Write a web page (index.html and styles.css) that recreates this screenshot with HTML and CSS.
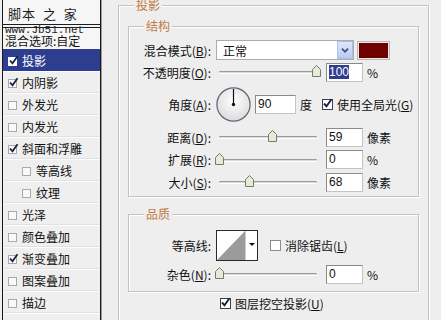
FILE: index.html
```html
<!DOCTYPE html>
<html lang="zh-CN">
<head>
    <meta charset="UTF-8">
    <meta name="viewport" content="width=device-width, initial-scale=1.0">
    <title>图层样式</title>
    <link rel="stylesheet" href="styles.css">
</head>
<body>
    <div class="styles-list">
        <div class="brand">脚本 之 家</div>
        <div class="brand-rule"></div>
        <div class="brand-url">www.Jb51.net</div>
        <div class="blend-opt">混合选项:自定</div>

        <div class="item active"><span class="cb"><svg viewBox="0 0 11 11"><path d="M2 5.5l2.5 2.8 5-7"/></svg></span>投影</div>
        <div class="item"><span class="cb"><svg viewBox="0 0 11 11"><path d="M2 5.5l2.5 2.8 5-7"/></svg></span>内阴影</div>
        <div class="item"><span class="cb"></span>外发光</div>
        <div class="item"><span class="cb"></span>内发光</div>
        <div class="item"><span class="cb"><svg viewBox="0 0 11 11"><path d="M2 5.5l2.5 2.8 5-7"/></svg></span>斜面和浮雕</div>
        <div class="item sub"><span class="cb"></span>等高线</div>
        <div class="item sub"><span class="cb"></span>纹理</div>
        <div class="item"><span class="cb"></span>光泽</div>
        <div class="item"><span class="cb"></span>颜色叠加</div>
        <div class="item"><span class="cb"><svg viewBox="0 0 11 11"><path d="M2 5.5l2.5 2.8 5-7"/></svg></span>渐变叠加</div>
        <div class="item"><span class="cb"></span>图案叠加</div>
        <div class="item"><span class="cb"></span>描边</div>
        <div class="item"></div>
    </div>

    <div class="main">
        <div class="group outer">
            <span class="group-title">投影</span>

            <div class="group inner">
                <span class="group-title">结构</span>

                <div class="row">
                    <span class="label">混合模式(<u>B</u>):</span>
                    <div class="select">
                        <span>正常</span>
                        <span class="select-btn"><svg viewBox="0 0 16 18"><path d="M4.5 7.5l3.5 3.5 3.5-3.5"/></svg></span>
                    </div>
                    <span class="swatch"></span>
                </div>

                <div class="row">
                    <span class="label">不透明度(<u>O</u>):</span>
                    <div class="slider">
                        <span class="track"></span>
                        <svg class="thumb" style="left: 96px" viewBox="0 0 9 12"><polygon points="0.5,4.5 4.5,0.5 8.5,4.5 8.5,11.5 0.5,11.5"/></svg>
                    </div>
                    <span class="field"><span class="sel">100</span></span>
                    <span class="unit">%</span>
                </div>

                <div class="row tall">
                    <span class="label">角度(<u>A</u>):</span>
                    <svg class="dial" viewBox="0 0 35 35">
                        <defs>
                            <radialGradient id="dialFill" cx="50%" cy="40%" r="60%">
                                <stop offset="0" stop-color="#ffffff"/>
                                <stop offset="1" stop-color="#dcdcdc"/>
                            </radialGradient>
                        </defs>
                        <circle cx="17.5" cy="17.5" r="16.6" fill="url(#dialFill)" stroke="#5d6474" stroke-width="1.2"/>
                        <line x1="17.5" y1="17.5" x2="17.5" y2="2" stroke="#111" stroke-width="1.2"/>
                        <circle cx="17.5" cy="17.5" r="1.7" fill="#111"/>
                    </svg>
                    <span class="field wide">90</span>
                    <span class="unit">度</span>
                    <span class="check"><svg viewBox="0 0 11 11"><path d="M2 5.5l2.5 2.8 5-7"/></svg></span>
                    <span class="check-text">使用全局光(<u>G</u>)</span>
                </div>

                <div class="row">
                    <span class="label">距离(<u>D</u>):</span>
                    <div class="slider">
                        <span class="track"></span>
                        <svg class="thumb" style="left: 52px" viewBox="0 0 9 12"><polygon points="0.5,4.5 4.5,0.5 8.5,4.5 8.5,11.5 0.5,11.5"/></svg>
                    </div>
                    <span class="field">59</span>
                    <span class="unit">像素</span>
                </div>

                <div class="row mid">
                    <span class="label">扩展(<u>R</u>):</span>
                    <div class="slider">
                        <span class="track"></span>
                        <svg class="thumb" style="left: -1px" viewBox="0 0 9 12"><polygon points="0.5,4.5 4.5,0.5 8.5,4.5 8.5,11.5 0.5,11.5"/></svg>
                    </div>
                    <span class="field">0</span>
                    <span class="unit">%</span>
                </div>

                <div class="row">
                    <span class="label">大小(<u>S</u>):</span>
                    <div class="slider">
                        <span class="track"></span>
                        <svg class="thumb" style="left: 29px" viewBox="0 0 9 12"><polygon points="0.5,4.5 4.5,0.5 8.5,4.5 8.5,11.5 0.5,11.5"/></svg>
                    </div>
                    <span class="field">68</span>
                    <span class="unit">像素</span>
                </div>
            </div>

            <div class="group inner quality">
                <span class="group-title">品质</span>

                <div class="row contour-row">
                    <span class="label">等高线:</span>
                    <svg class="contour" viewBox="0 0 42 31">
                        <rect x="0.5" y="0.5" width="41" height="30" fill="#fff" stroke="#2a2a2a"/>
                        <polygon points="1,30 29,1 29,30" fill="#9b9b9b"/>
                        <line x1="29.5" y1="1" x2="29.5" y2="30" stroke="#cfcfcf"/>
                        <polygon points="33,13 39,13 36,16" fill="#111"/>
                    </svg>
                    <span class="check off"></span>
                    <span class="check-text">消除锯齿(<u>L</u>)</span>
                </div>

                <div class="row noise-row">
                    <span class="label">杂色(<u>N</u>):</span>
                    <div class="slider">
                        <span class="track"></span>
                        <svg class="thumb" style="left: -1px" viewBox="0 0 9 12"><polygon points="0.5,4.5 4.5,0.5 8.5,4.5 8.5,11.5 0.5,11.5"/></svg>
                    </div>
                    <span class="field">0</span>
                    <span class="unit">%</span>
                </div>
            </div>

            <div class="knockout">
                <span class="check"><svg viewBox="0 0 11 11"><path d="M2 5.5l2.5 2.8 5-7"/></svg></span>
                <span class="check-text">图层挖空投影(<u>U</u>)</span>
            </div>
        </div>
    </div>
</body>
</html>
```

FILE: styles.css
```css
* {
    box-sizing: border-box;
}
body {
    margin: 0;
    width: 441px;
    height: 320px;
    overflow: hidden;
    display: flex;
    background-color: #eeeeee;
    font-family: "Noto Sans CJK SC", "Noto Sans", sans-serif;
    font-size: 12px;
    color: #111;
}

/* left list of effects */
.styles-list {
    width: 99px;
    margin-left: 2px;
    flex-shrink: 0;
    border-left: 1px solid #1a1a1a;
    border-right: 1px solid #1a1a1a;
    box-shadow: 1px 0 0 #9a9a9a;
    background-color: #f6f6f6;
}
.brand {
    height: 24px;
    padding: 4px 0 0 5px;
    font-size: 13px;
    line-height: 20px;
    letter-spacing: 1px;
    word-spacing: 3px;
    color: #1e1e1e;
    white-space: nowrap;
}
.brand-rule {
    height: 4px;
    border-top: 1px solid #1e1e1e;
    border-bottom: 1px solid #1e1e1e;
}
.brand-url {
    margin-top: -2px;
    height: 8px;
    padding-left: 2px;
    font-family: "Liberation Mono", monospace;
    font-size: 11px;
    line-height: 8px;
    color: #222;
}
.blend-opt {
    height: 14px;
    margin-bottom: 1px;
    padding-left: 2px;
    line-height: 14px;
    white-space: nowrap;
}
.item {
    height: 22px;
    display: flex;
    align-items: center;
    padding-left: 5px;
    background-color: #efefef;
    border-top: 1px solid #fcfcfc;
    border-bottom: 1px solid #e1e1e1;
    white-space: nowrap;
}
.item.sub {
    padding-left: 19px;
}
.item.active {
    background-color: #2d3e91;
    border-color: #2d3e91;
    color: #fff;
}
.cb {
    position: relative;
    width: 9px;
    height: 9px;
    margin: 2px 5px 0 0;
    flex-shrink: 0;
    border: 1px solid #a9a9a9;
    background-color: #f9f9f9;
}
.item.active .cb {
    border-color: #fff;
    background-color: #fff;
}
.cb svg {
    position: absolute;
    left: -1px;
    top: -3px;
    width: 11px;
    height: 11px;
    fill: none;
    stroke: #1b2240;
    stroke-width: 1.8;
}

/* right side */
.main {
    flex: 1;
    padding: 5px 0 0 17px;
}
.group {
    position: relative;
    border: 1px solid #c3c3c3;
    box-shadow: inset 1px 1px 0 #fff, 1px 1px 0 #fff;
}
.outer {
    width: 311px;
    height: 330px;
}
.group-title {
    position: absolute;
    top: -8px;
    left: 15px;
    padding: 0 2px;
    line-height: 14px;
    background-color: #eeeeee;
    color: #c27a46;
}
.inner {
    margin: 20px 9px 0;
    padding: 12px 0 3px;
}
.quality {
    margin-top: 17px;
    padding: 13px 0 5px;
}
.row {
    display: flex;
    align-items: center;
    height: 22px;
    white-space: nowrap;
}
.row.tall {
    height: 43px;
}
.row.mid {
    height: 23px;
}
.row.contour-row {
    height: 34px;
}
.row.noise-row {
    height: 24px;
}
.label {
    width: 82px;
    flex-shrink: 0;
    text-align: right;
}

.select {
    display: flex;
    align-items: center;
    width: 138px;
    height: 20px;
    margin-left: 5px;
    padding-left: 6px;
    background-color: #fff;
    border: 1px solid #a9acb2;
}
.select-btn {
    margin-left: auto;
    width: 16px;
    height: 18px;
    background: linear-gradient(#dfe8fb, #b8cbf3);
    border: 1px solid #a9bde6;
}
.select-btn svg {
    display: block;
    width: 14px;
    height: 16px;
    fill: none;
    stroke: #3b4f7a;
    stroke-width: 2;
}
.swatch {
    width: 31px;
    height: 17px;
    margin-left: 4px;
    background-color: #6e0000;
    border: 1px solid #f4e4e4;
    box-shadow: 0 0 0 1px #b8b8b8;
}

.slider {
    position: relative;
    width: 104px;
    height: 22px;
    margin-left: 5px;
    flex-shrink: 0;
}
.track {
    position: absolute;
    left: 3px;
    right: 3px;
    top: 10px;
    height: 3px;
    border-top: 1px solid #9b9b9b;
    border-bottom: 1px solid #fff;
    border-radius: 1px;
    background-color: #d9d9d9;
}
.thumb {
    position: absolute;
    top: 4px;
    width: 9px;
    height: 12px;
    fill: #e4ecd9;
    stroke: #6f7d69;
    stroke-width: 1;
}

.field {
    width: 37px;
    height: 19px;
    margin-left: 6px;
    padding-left: 2px;
    background-color: #fff;
    border: 1px solid #c4c4c4;
    border-top-color: #8a8a8a;
    border-left-color: #8a8a8a;
    font-family: "Liberation Sans", Arial, sans-serif;
    font-size: 12px;
    line-height: 17px;
}
.field.wide {
    width: 41px;
    margin-left: 4px;
}
.field .sel {
    background-color: #2d3e91;
    color: #fff;
}
.unit {
    margin-left: 4px;
}
.dial {
    width: 35px;
    height: 35px;
    margin-left: 5px;
    flex-shrink: 0;
}

.check {
    width: 11px;
    height: 11px;
    margin-left: 10px;
    flex-shrink: 0;
    background-color: #fff;
    border: 1px solid #3c3f4a;
}
.check.off {
    margin-left: 12px;
    border-color: #8c8c8c;
}
.check svg {
    display: block;
    width: 11px;
    height: 11px;
    margin: -2px 0 0 -1px;
    fill: none;
    stroke: #16203c;
    stroke-width: 1.9;
}
.check-text {
    margin-left: 4px;
}
.contour {
    width: 42px;
    height: 31px;
    margin-left: 5px;
    flex-shrink: 0;
}
.knockout {
    display: flex;
    align-items: center;
    height: 22px;
    padding-left: 101px;
}
.knockout .check {
    margin-left: 0;
}
```
